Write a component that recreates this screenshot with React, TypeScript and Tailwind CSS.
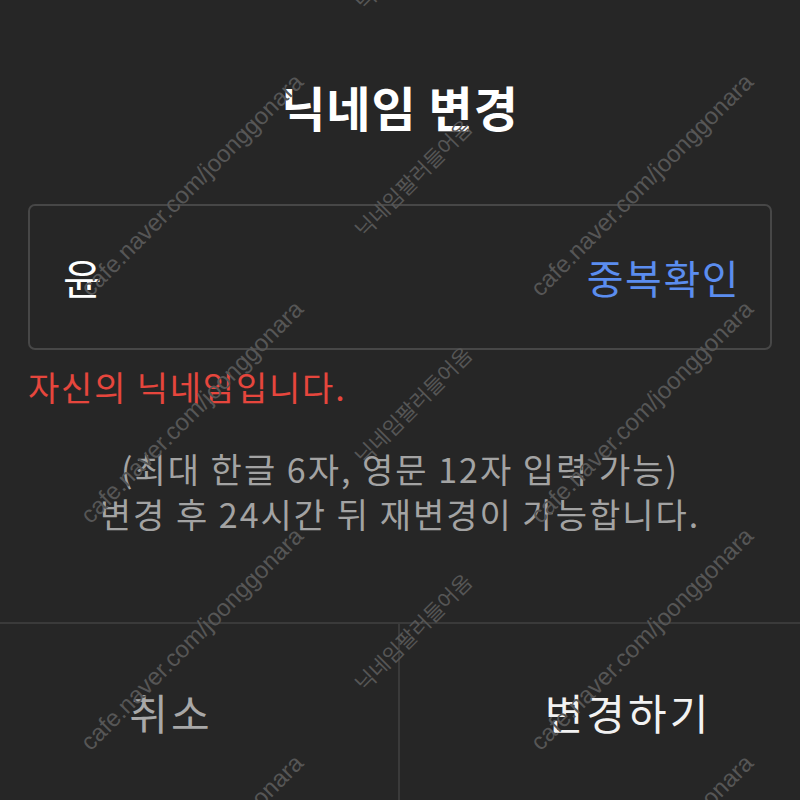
import React from 'react';

const kr = "font-['Noto_Sans_CJK_KR','Noto_Sans',sans-serif]";

function Watermarks() {
  const url = "absolute -translate-x-1/2 -translate-y-1/2 -rotate-45 whitespace-nowrap text-[24px] leading-none text-[#565656] font-['Liberation_Sans',sans-serif]";
  const nick = `absolute -translate-x-1/2 -translate-y-1/2 -rotate-45 whitespace-nowrap text-[21px] leading-none text-[#565656] ${kr}`;
  return (
    <div className="pointer-events-none absolute inset-0">
      <span className={`${url} left-[192px] top-[185px]`}>cafe.naver.com/joonggonara</span>
      <span className={`${url} left-[642px] top-[185px]`}>cafe.naver.com/joonggonara</span>
      <span className={`${url} left-[192px] top-[412px]`}>cafe.naver.com/joonggonara</span>
      <span className={`${url} left-[642px] top-[412px]`}>cafe.naver.com/joonggonara</span>
      <span className={`${url} left-[192px] top-[639px]`}>cafe.naver.com/joonggonara</span>
      <span className={`${url} left-[642px] top-[639px]`}>cafe.naver.com/joonggonara</span>
      <span className={`${url} left-[192px] top-[866px]`}>cafe.naver.com/joonggonara</span>
      <span className={`${url} left-[642px] top-[866px]`}>cafe.naver.com/joonggonara</span>

      <span className={`${nick} left-[413px] top-[-49px]`}>닉네임팔러들어옴</span>
      <span className={`${nick} left-[413px] top-[178px]`}>닉네임팔러들어옴</span>
      <span className={`${nick} left-[413px] top-[405px]`}>닉네임팔러들어옴</span>
      <span className={`${nick} left-[413px] top-[632px]`}>닉네임팔러들어옴</span>
      <span className={`${nick} left-[413px] top-[859px]`}>닉네임팔러들어옴</span>
    </div>
  );
}

export default function App() {
  return (
    <div className={`relative flex h-[800px] w-[800px] flex-col overflow-hidden bg-[#262626] ${kr}`}>
      <h1 className="mt-[82px] text-center text-[48px] font-bold leading-none tracking-[1px] text-white">
        닉네임 변경
      </h1>

      <div className="mx-[28px] mt-[74px] flex h-[146px] items-center justify-between rounded-[7px] border-2 border-[#474747] pl-[33px] pr-[30px]">
        <span className="text-[42px] leading-none text-white">윤</span>
        <button className="text-[40px] leading-none tracking-[1.5px] text-[#5b8def]">중복확인</button>
      </div>

      <p className="ml-[28px] mt-[20px] text-[34px] leading-none tracking-[1.8px] text-[#e6463d]">
        자신의 닉네임입니다.
      </p>

      <div className="mt-[42px] text-center text-[34px] leading-[45px] tracking-[2px] text-[#a3a3a3]">
        <p>(최대 한글 6자, 영문 12자 입력 가능)</p>
        <p>변경 후 24시간 뒤 재변경이 가능합니다.</p>
      </div>

      <div className="mt-auto grid h-[178px] grid-cols-2 border-t-2 border-[#3a3a3a]">
        <button className="flex items-center justify-center border-r-2 border-[#3a3a3a] pr-[56px] text-[42px] leading-none tracking-[3px] text-[#a8a8a8]">
          취소
        </button>
        <button className="flex items-center justify-center pl-[56px] text-[42px] leading-none tracking-[3px] text-[#f2f2f2]">
          변경하기
        </button>
      </div>

      <Watermarks />
    </div>
  );
}
